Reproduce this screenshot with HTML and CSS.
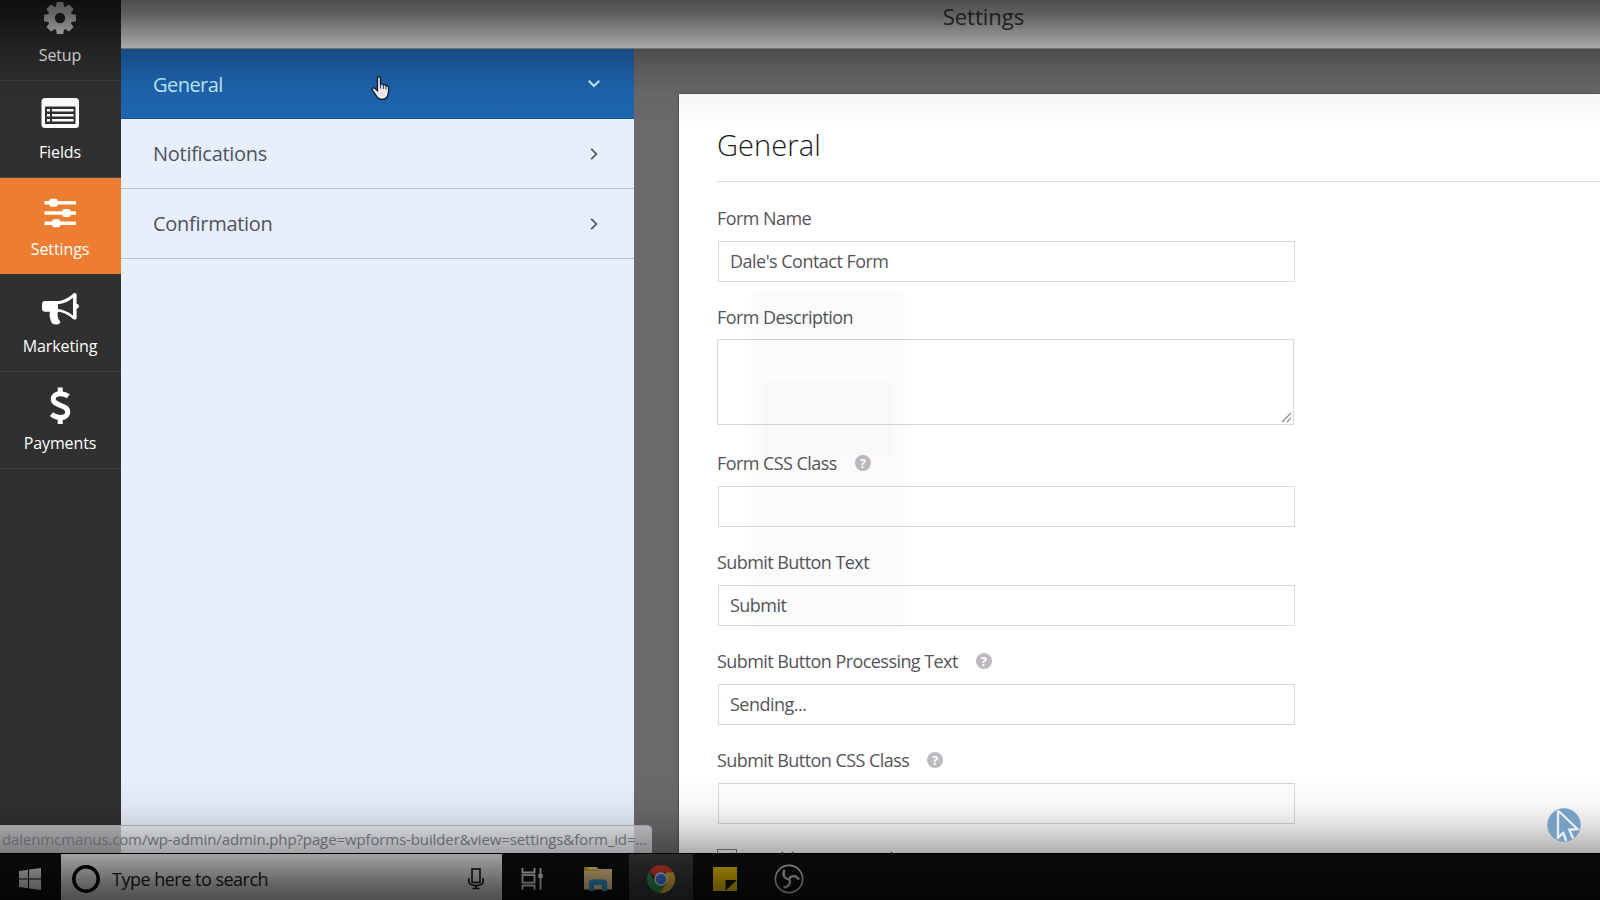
FILE: index.html
```html
<!DOCTYPE html>
<html lang="en">
<head>
<meta charset="utf-8">
<title>Settings</title>
<link rel="stylesheet" href="styles.css">
</head>
<body>
<div class="screen">
  <div class="builder">
    <nav class="toolbar">
      <a class="tool">
        <svg class="tool-icon" viewBox="0 0 40 40"><g fill="#fff"><circle cx="20" cy="20" r="12.2"/><path d="M16.800 4h6.400l1 5.500h-8.400zM16.800 36h6.400l1-5.500h-8.400z"/><path d="M16.800 4h6.400l1 5.500h-8.400zM16.800 36h6.400l1-5.500h-8.400z" transform="rotate(45 20 20)"/><path d="M16.800 4h6.400l1 5.500h-8.400zM16.800 36h6.400l1-5.500h-8.400z" transform="rotate(90 20 20)"/><path d="M16.800 4h6.400l1 5.500h-8.400zM16.800 36h6.400l1-5.500h-8.400z" transform="rotate(135 20 20)"/></g><circle cx="20" cy="20" r="5.200" fill="#303030"/></svg>
        <span class="tool-label">Setup</span>
      </a>
      <a class="tool">
        <svg class="tool-icon" viewBox="0 0 40 40"><rect x="1.500" y="3" width="37.500" height="30" rx="3.500" fill="#fff"/><path d="M5 11.500h30.500v17.500h-30.500z" fill="#303030"/><path fill="#fff" d="M7 14h3v2.500h-3zM12 14h21.500v2.500h-21.500zM7 19h3v2.500h-3zM12 19h21.500v2.500h-21.500zM7 24h3v2.500h-3zM12 24h21.500v2.500h-21.500z"/></svg>
        <span class="tool-label">Fields</span>
      </a>
      <a class="tool active">
        <svg class="tool-icon" viewBox="0 0 40 40"><path fill="#fff" d="M4.500 9h31.500v3.600h-31.500zM4.500 19.200h31.500v3.600h-31.500zM4.500 29.500h31.500v3.600h-31.500z"/><g fill="#fff"><rect x="9.500" y="6.700" width="8" height="8" rx="1.800"/><rect x="22.500" y="17" width="8" height="8" rx="1.800"/><rect x="12.200" y="27.300" width="8" height="8" rx="1.800"/></g></svg>
        <span class="tool-label">Settings</span>
      </a>
      <a class="tool">
        <svg class="tool-icon" viewBox="0 0 40 40"><path fill="#fff" fill-rule="evenodd" d="M5 12h12c6 0 12-3.500 16-7.300 1.300-1.200 3.600-.8 3.600 1.200v8.800c1.200.2 2.400 1 2.400 2.500s-1.200 2.300-2.400 2.500v9c0 2-2.200 2.500-3.600 1.200-4-3.700-9.500-6.900-15-7.200-1.300 3 .2 5 0 6.300.5 2 2 2.700 2.500 4.300-1.300 3-7.800 3-9 .3-1.300-3.600-2.700-7.200-1.500-10.900h-5c-1.700 0-3-1.300-3-3v-5c0-1.500 1.300-2.700 3-2.700zM18 15.200v4.900c5.500.6 10.600 3 15 6.300v-17.700c-4.400 3.500-9.500 6-15 6.500z"/></svg>
        <span class="tool-label">Marketing</span>
      </a>
      <a class="tool">
        <svg class="tool-icon" viewBox="0 0 40 40"><path d="M28.300 10.200c-2.500-1.700-5.300-2.500-8-2.500-4.600 0-7.100 2.200-7.100 5.400 0 7.200 14.500 5.200 14.500 12.700 0 3.800-3 5.800-7.400 5.800-3.300 0-6.300-1.200-8.800-3.400" fill="none" stroke="#fff" stroke-width="5"/><path d="M17.700 1.500h5v7h-5zM17.700 31h5v7h-5z" fill="#fff"/></svg>
        <span class="tool-label">Payments</span>
      </a>
    </nav>
    <div class="workspace">
      <header class="topbar"><span class="topbar-title">Settings</span></header>
      <div class="columns">
        <aside class="sections">
          <a class="section current"><span class="section-name">General</span><svg class="chev" viewBox="0 0 16 16"><path d="M2.700 4.800l5.300 5.200 5.300-5.200" fill="none" stroke="currentColor" stroke-width="2.100"/></svg></a>
          <a class="section"><span class="section-name">Notifications</span><svg class="chev" viewBox="0 0 16 16"><path d="M5.200 2.800l5.200 5.200-5.200 5.200" fill="none" stroke="currentColor" stroke-width="1.700"/></svg></a>
          <a class="section"><span class="section-name">Confirmation</span><svg class="chev" viewBox="0 0 16 16"><path d="M5.200 2.800l5.200 5.200-5.200 5.200" fill="none" stroke="currentColor" stroke-width="1.700"/></svg></a>
        </aside>
        <main class="preview">
          <div class="card">
            <h1 class="card-title">General</h1>
            <div class="field"><div class="label">Form Name</div><div class="input">Dale's Contact Form</div></div>
            <div class="field"><div class="label">Form Description</div><div class="input area"><svg class="grip" viewBox="0 0 12 12"><path d="M1 11L10 2M6 11l4-4" stroke="#888" stroke-width="1.100"/></svg></div></div>
            <div class="field"><div class="label">Form CSS Class<span class="help">?</span></div><div class="input"></div></div>
            <div class="field"><div class="label">Submit Button Text</div><div class="input">Submit</div></div>
            <div class="field"><div class="label">Submit Button Processing Text<span class="help">?</span></div><div class="input">Sending...</div></div>
            <div class="field"><div class="label">Submit Button CSS Class<span class="help">?</span></div><div class="input"></div></div>
            <div class="check-row"><span class="checkbox"><svg viewBox="0 0 20 20"><path d="M5 9l4 5 7-11" fill="none" stroke="#333" stroke-width="2"/></svg></span><span class="check-text">Enable anti-spam honeypot</span></div>
          </div>
        </main>
      </div>
    </div>
    <div class="ghost"><div class="ghost-inner"></div></div>
    <div class="status">dalenmcmanus.com/wp-admin/admin.php?page=wpforms-builder&amp;view=settings&amp;form_id=...</div>
    <svg class="hand" viewBox="0 0 20 26"><path d="M6.300 2.600c0-2.300 3.200-2.300 3.200 0v6c.5-.8 2.700-.6 2.900.7.800-.7 2.600-.3 2.800 1 1-.6 2.700 0 2.700 1.700 0 4 .2 6.500-1.200 9.200-1 2-2.500 3.200-5.500 3.200-3.200 0-4.600-1.300-5.900-3.500-1.200-2-2.500-3.700-4.200-6-1.300-1.800.9-3.300 2.500-2l2.700 2.400z" fill="#f4f4f4" stroke="#101830" stroke-width="1.300"/><path d="M9.600 8v5M12.500 9.500v4M15.200 10.500v3.500" stroke="#333a50" stroke-width="1"/></svg>
  </div>
  <footer class="taskbar">
    <div class="start"><svg width="22" height="22" viewBox="0 0 22 22"><path fill="#e6e6e6" d="M0 3l9-1.200v8.700H0zM10 1.600L22 0v10.500H10zM0 11.500h9v8.700L0 19zM10 11.500h12V22l-12-1.600z"/></svg></div>
    <div class="search">
      <svg width="30" height="30" viewBox="0 0 30 30"><circle cx="15" cy="15" r="12.200" fill="none" stroke="#000" stroke-width="3.500"/></svg>
      <span class="search-text">Type here to search</span>
      <svg class="mic" width="18" height="24" viewBox="0 0 18 24"><rect x="5" y="2" width="8" height="13.500" fill="none" stroke="#111" stroke-width="1.600"/><path d="M1.800 11v3.500c0 5.500 14.400 5.500 14.400 0V11M9 18.500v3.300M5.500 21.500h7" fill="none" stroke="#111" stroke-width="1.600"/></svg>
    </div>
    <div class="apps">
      <div class="app tasks"><svg width="24" height="24" viewBox="0 0 24 24"><path d="M2.500 1v4.500h12V1M2.500 22.500v-4h12v4M2.500 8.200h12v7.500h-12zM20.500 1v21.500" fill="none" stroke="#eee" stroke-width="1.800"/><path d="M18.300 7h4.400v4h-4.400z" fill="#eee"/></svg></div>
      <div class="app files"><svg width="30" height="26" viewBox="0 0 30 26"><path d="M1 1h12l3 2h13v20.500H1z" fill="#ffe09a"/><path d="M4 1h9.500l2 2.500h-10z" fill="#fff0a0"/><path d="M1 3v-2h3l1.500 2.800h9L16 5H1z" fill="#edb420"/><path d="M6 25v-9.500l2-2h14l2 2v9.500h-5v-6h-8v6z" fill="#35a6e8"/></svg></div>
      <div class="app on"><svg width="30" height="30" viewBox="0 0 30 30"><path d="M15 15L2.900 8A14 14 0 0 1 27.300 8.200L15 8.200z" fill="#ea4335"/><path d="M2.900 8A14 14 0 0 0 14 29L20.500 18.500 9 18.500z" fill="#32a552"/><path d="M27.300 8.300A14 14 0 0 1 13.800 29L21 18.500 20 8.300z" fill="#fbc540"/><circle cx="15" cy="15" r="6.700" fill="#f2f2f2"/><circle cx="15" cy="15" r="5.200" fill="#4781f0"/></svg></div>
      <div class="app"><svg width="24" height="24" viewBox="0 0 24 24"><path d="M0 0h24v24H0z" fill="#ffd400"/><path d="M12.500 13h11.500L12.500 23.500z" fill="#17140a"/></svg></div>
      <div class="app"><svg width="30" height="30" viewBox="0 0 30 30"><g fill="none" stroke="#d8d8d8"><circle cx="15" cy="15" r="13.600" stroke-width="1.600"/><g stroke-width="2.300"><path d="M15.500 15c-5 .5-7.500-4-5-9"/><path d="M15.500 15c-5 .5-7.500-4-5-9" transform="rotate(120 15 15)"/><path d="M15.500 15c-5 .5-7.500-4-5-9" transform="rotate(240 15 15)"/></g></g></svg></div>
    </div>
  </footer>
  <div class="vignette"></div>
  <svg class="watermark" viewBox="0 0 34 34"><circle cx="17" cy="17" r="16.700" fill="#759fc3"/><path d="M11 2.500v27l5.300-4.500 3 8M11 2.500L30.500 21l-8.300.8 4 8.700" fill="none" stroke="#e9eef2" stroke-width="2.300"/></svg>
</div>
</body>
</html>
```
FILE: styles.css
```css
* { box-sizing: border-box; }
body { margin: 0; font-family: "Open Sans", "Noto Sans", sans-serif; }
svg { display: block; flex: none; }
.screen { position: relative; width: 1600px; height: 900px; overflow: hidden; display: flex; flex-direction: column; background: #0e1010; }
.builder { position: relative; display: flex; height: 853px; overflow: hidden; }

.toolbar { width: 121px; flex: none; background: #303030; display: flex; flex-direction: column; overflow: hidden; }
.tool { height: 97px; flex: none; display: flex; flex-direction: column; align-items: center; padding: 14px 1px 0 0; border-bottom: 1px solid #434343; color: #fff; }
.tool:first-child { margin-top: -16px; }
.tool.active { background: #ed7d31; border-bottom-color: #303030; }
.tool-icon { width: 40px; height: 40px; }
.tool-label { margin-top: 6px; font-size: 16px; line-height: 22px; letter-spacing: -0.100px; }

.workspace { flex: 1; display: flex; flex-direction: column; min-width: 0; }
.topbar { height: 49px; flex: none; background: #ebebeb; border-bottom: 1px solid #a0a0a0; display: flex; justify-content: center; padding-left: 246px; }
.topbar-title { font-size: 22px; line-height: 32px; color: #444; }
.columns { flex: 1; display: flex; min-height: 0; }

.sections { width: 513px; flex: none; background: #e8effc; }
.section { height: 70px; display: flex; align-items: center; justify-content: space-between; padding: 0 32px; border-bottom: 1.500px solid #b9bfca; font-size: 20px; color: #4f535c; }
.section.current { background: #1e66b1; border-bottom-color: #155a9c; color: #c4f2ff; }
.section-name { letter-spacing: -0.280px; }
.current .section-name { letter-spacing: -0.550px; padding-top: 1px; }
.chev { width: 16px; height: 16px; }

.preview { flex: 1; background: #6b696b; padding: 45px 0 0 45px; min-width: 0; display: flex; }
.card { flex: 1; background: #fff; box-shadow: 0 0 2px 0 #333; padding: 0 0 0 38px; overflow: hidden; }
.card-title { margin: 0 0 24px; height: 88px; border-bottom: 1.500px solid #ddd; font-size: 29px; line-height: 102px; font-weight: 300; letter-spacing: 0.100px; color: #1c1b20; }
.field { width: 578px; color: #55545a; }
.label { display: flex; align-items: center; height: 24px; font-size: 18px; white-space: nowrap; letter-spacing: -0.560px; }
.input { margin: 11px 0 23px 1px; height: 41px; border: 1px solid #d9d9dc; padding-left: 11px; font-size: 18px; line-height: 39px; letter-spacing: -0.520px; }
.area { position: relative; height: 86px; margin: 10px 1px 26px 0; border-width: 1.500px; }
.grip { position: absolute; right: 0; bottom: 1px; width: 12px; height: 12px; }
.help { margin-left: 18px; width: 16px; height: 16px; border-radius: 50%; background: #bdbbbe; color: #fff; font: 700 13px/16px "Open Sans", sans-serif; text-align: center; letter-spacing: 0; }
.check-row { display: flex; gap: 14px; align-items: center; height: 24px; font-size: 18px; letter-spacing: -0.700px; color: #222; }
.check-text { padding-bottom: 1px; line-height: 24px; }
.checkbox { width: 20px; height: 20px; border: 1px solid #888; }

.ghost { position: absolute; left: 751px; top: 290px; width: 154px; height: 342px; border-radius: 8px; background: rgba(0,0,0,.014); padding: 92px 11px 0; }
.ghost-inner { height: 74px; border-radius: 4px; background: rgba(80,40,0,.012); }
.status { position: absolute; left: 0; top: 825px; width: 652px; height: 28px; padding-left: 2px; border-top: 1px solid #b4b8be; border-top-right-radius: 5px; background: rgba(238,240,242,.72); color: #84868c; font-size: 15px; letter-spacing: -0.120px; line-height: 27px; white-space: nowrap; }
.hand { position: absolute; left: 371px; top: 76px; width: 20px; height: 25px; }

.taskbar { height: 47px; display: flex; background: #0e1010; border-top: 1px solid #000; }
.start { width: 61px; padding: 3px 1px 0 0; display: flex; align-items: center; justify-content: center; }
.search { width: 441px; background: #f0f0f0; display: flex; align-items: center; padding: 3px 17px 0 10px; }
.search-text { margin-left: 11px; font-size: 18px; color: #202020; flex: 1; letter-spacing: -0.500px; }
.apps { display: flex; }
.app { width: 64px; padding-top: 3px; display: flex; align-items: center; justify-content: center; }
.app.tasks { width: 60px; }
.app.files { width: 67px; padding-left: 4px; }
.app.on { width: 64px; background: #3c3d3d; }

.vignette { position: absolute; inset: 0; pointer-events: none; background: linear-gradient(to bottom, rgba(0,0,0,.67) 0, rgba(0,0,0,.59) 15px, rgba(0,0,0,.28) 48px, rgba(0,0,0,.12) 74px, rgba(0,0,0,.04) 94px, rgba(0,0,0,0) 125px, rgba(0,0,0,0) 775px, rgba(0,0,0,.04) 806px, rgba(0,0,0,.12) 826px, rgba(0,0,0,.31) 852px, rgba(0,0,0,.59) 885px, rgba(0,0,0,.67) 900px); }
.watermark { position: absolute; left: 1547px; top: 808px; width: 34px; height: 34px; }
```
